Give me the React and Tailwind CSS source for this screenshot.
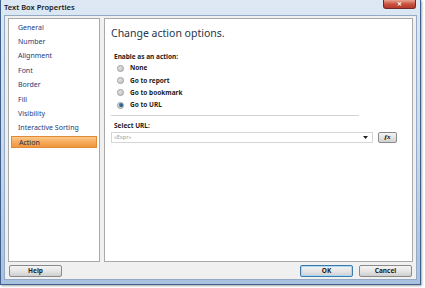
import { useState } from "react";

const navItems = [
  "General",
  "Number",
  "Alignment",
  "Font",
  "Border",
  "Fill",
  "Visibility",
  "Interactive Sorting",
  "Action",
];

const actions = ["None", "Go to report", "Go to bookmark", "Go to URL"];

const Radio = ({ checked }) => (
  <span className="w-[7px] h-[7px] rounded-full border border-[#9a9a9a] bg-gradient-to-br from-[#e8e8e8] to-[#c4c4c4] flex items-center justify-center shrink-0">
    {checked && (
      <span className="w-[4px] h-[4px] rounded-full bg-gradient-to-br from-[#4a8ed0] to-[#173e6e]" />
    )}
  </span>
);

const WinButton = ({ label, primary }) => (
  <button
    className={`w-[53px] h-[12px] rounded-[2px] border text-[6.5px] font-bold leading-none text-[#222] bg-gradient-to-b from-[#f4f4f4] via-[#e6e6e6] to-[#cfcfcf] ${
      primary ? "border-[#3d7bad] shadow-[inset_0_0_0_1px_#a8d8f5]" : "border-[#8a8a8a]"
    }`}
  >
    {label}
  </button>
);

const App = () => {
  const [selected, setSelected] = useState("Action");
  const [action, setAction] = useState("Go to URL");

  return (
    <div className="w-[425px] h-[288px] bg-white font-['Noto_Sans',sans-serif]">
      <div className="w-[421px] h-[285px] flex flex-col border-l border-r border-b border-[#3f5f8c] bg-gradient-to-b from-[#dde8f4] via-[#c9dbee] to-[#a7c1df] shadow-[1px_1px_2px_rgba(0,0,0,0.35)]">
        {/* title bar */}
        <div className="h-[15px] flex items-start justify-between pl-[3px] pr-[4px]">
          <span className="text-[7.5px] font-semibold text-[#1b1b1b] leading-[14px]">
            Text Box Properties
          </span>
          <div className="w-[33px] h-[9px] rounded-b-[3px] border border-t-0 border-[#6e2a2a] bg-gradient-to-b from-[#e8a493] via-[#c9523f] to-[#b53a2a] flex items-center justify-center">
            <span className="text-[6px] font-bold text-white leading-none">✕</span>
          </div>
        </div>

        {/* client area */}
        <div className="flex-1 mx-[3px] mb-[4px] bg-[#f0f0f0] border border-[#94a9c4] flex flex-col px-[3px] pt-[2px] pb-[1px]">
          <div className="flex-1 flex gap-[4px]">
            {/* nav */}
            <div className="w-[92px] bg-white border border-[#a9a9a9] pt-[1px] flex flex-col">
              {navItems.map((item) => (
                <div
                  key={item}
                  onClick={() => setSelected(item)}
                  className={`mx-[2px] my-[1.2px] h-[12px] flex items-center pl-[7px] text-[7px] leading-none ${
                    selected === item
                      ? "bg-gradient-to-b from-[#fbc98a] via-[#f6ab5c] to-[#f0963e] border border-[#e08a35] text-[#1d2a44] pl-[6px]"
                      : "text-[#1e3a78]"
                  }`}
                >
                  {item}
                </div>
              ))}
            </div>

            {/* content */}
            <div className="flex-1 bg-white border border-[#a9a9a9] pl-[6px] pt-[8px]">
              <div className="text-[10.5px] text-[#26364a] leading-[13px]">
                Change action options.
              </div>
              <div className="mt-[12px] pl-[3px] text-[6.5px] font-bold text-[#222] leading-[10px]">
                Enable as an action:
              </div>
              <div className="pl-[6px] flex flex-col">
                {actions.map((a) => (
                  <label
                    key={a}
                    onClick={() => setAction(a)}
                    className="h-[12.3px] flex items-center gap-[6px] text-[6.5px] font-bold text-[#222]"
                  >
                    <Radio checked={action === a} />
                    {a}
                  </label>
                ))}
              </div>
              <div className="mt-[4px] w-[248px] h-[2px] border-t border-[#d3d3d3] bg-white" />
              <div className="mt-[4px] pl-[3px] text-[6.5px] font-bold text-[#222] leading-[10px]">
                Select URL:
              </div>
              <div className="mt-[1px] flex items-center gap-[5px]">
                <div className="w-[262px] h-[11px] border border-[#d6d6d6] bg-white flex items-center justify-between pl-[2px] pr-[4px]">
                  <span className="text-[5.5px] text-[#9a9a9a] leading-none">«Expr»</span>
                  <svg width="5" height="3" viewBox="0 0 5 3">
                    <path d="M0 0 L5 0 L2.5 3 Z" fill="#222" />
                  </svg>
                </div>
                <div className="w-[19px] h-[11px] rounded-[2px] border border-[#8a8a8a] bg-gradient-to-b from-[#f4f4f4] to-[#d2d2d2] flex items-center justify-center">
                  <span className="text-[7px] italic font-bold font-['Liberation_Serif',serif] text-black leading-none">
                    fx
                  </span>
                </div>
              </div>
            </div>
          </div>

          {/* bottom buttons */}
          <div className="h-[16px] flex items-end justify-between px-[1px] pb-[1px]">
            <WinButton label="Help" />
            <div className="flex gap-[6px]">
              <WinButton label="OK" primary />
              <WinButton label="Cancel" />
            </div>
          </div>
        </div>
      </div>
    </div>
  );
};

export default App;
